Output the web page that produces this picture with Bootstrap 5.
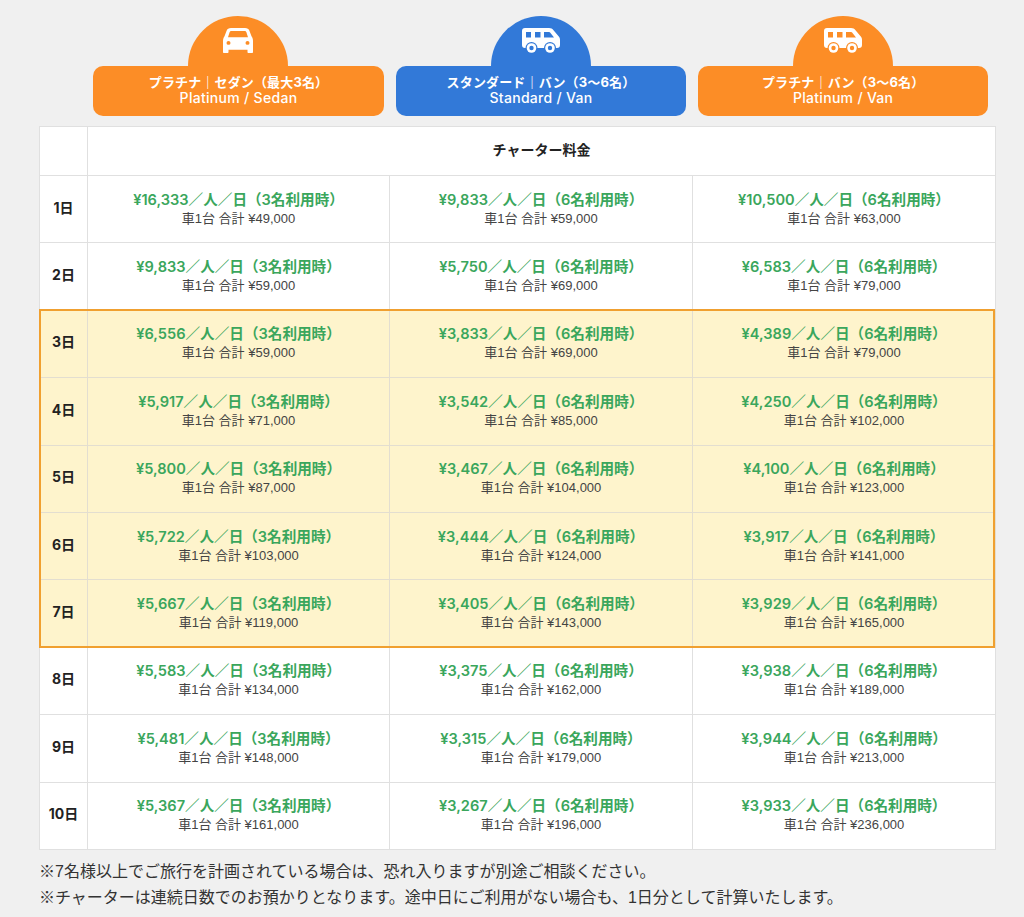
<!DOCTYPE html>
<html lang="ja">
<head>
<meta charset="utf-8">
<title>チャーター料金</title>
<link href="https://cdn.jsdelivr.net/npm/bootstrap@5.3.0/dist/css/bootstrap.min.css" rel="stylesheet">
<style>
html,body{height:917px;overflow:hidden}
body{background:#f0f0f0;color:#333;font-family:"Liberation Sans","Noto Sans CJK JP",sans-serif}
.page-wrap{padding:16px 29px 0 39px}
.plan-head{padding-left:48px;gap:0}
.plan-col{width:302.67px;padding:0 6px;display:flex;flex-direction:column;align-items:center}
.plan-col:first-child{padding-right:5.67px}
.plan-col:last-child{padding-right:7px}
.plan-dome{width:100px;height:50px;border-radius:50px 50px 0 0;display:flex;justify-content:center;color:#fff;padding-top:12px;margin-right:.5px}
.plan-label{width:100%;height:50px;border-radius:10px;color:#fff;font-family:Inter,"Noto Sans CJK JP",sans-serif;font-size:13px;line-height:16px;font-weight:700;text-align:center;padding-top:8px;letter-spacing:.15px}
.plan-en{font-size:14px;font-weight:500;letter-spacing:.3px}
.tone-orange{background:#fc8d26}
.tone-blue{background:#3279d8}
.table-frame{margin-top:10px;width:956px}
.rate-table{table-layout:fixed;width:956px;margin:0;--bs-table-bg:#fff;--bs-border-color:#e0e0e0;--bs-table-border-color:#e0e0e0;border-color:#e0e0e0}
.rate-table th,.rate-table td{padding:0;text-align:center;vertical-align:middle;height:67.4px}
.rate-table thead th{height:49px;padding-bottom:2px;font-size:14px;color:#222}
.rate-table tbody th{padding-bottom:4px;font-family:Inter,"Noto Sans CJK JP",sans-serif;font-size:14px;color:#222}
.rate-table tbody.hl-rows{--bs-table-bg:#fef4cc}
.hl-rows tr,.hl-rows th,.hl-rows td{border-color:#e3ded0}
.hl-outline{top:183px;left:0;right:0;height:339px;border:2px solid #f0a030;pointer-events:none}
.price-main{display:block;color:#3aa65c;font-family:Inter,"Noto Sans CJK JP",sans-serif;font-size:14.6px;font-weight:600;line-height:19px}
.price-sub{display:block;color:#444;font-size:13px;line-height:18px}
.note-list{font-size:16px;line-height:26px;color:#333;margin:9px 0 0;padding:0;list-style:none}
</style>
</head>
<body>
<div class="page-wrap">
  <div class="d-flex plan-head">
    <div class="plan-col">
      <div class="plan-dome tone-orange">
        <svg width="30" height="25" viewBox="0 0 30 26" preserveAspectRatio="none" fill="currentColor" fill-rule="evenodd"><path d="M8 0H22C24.300 0 25.700 1 26.500 3L28.500 8.500C29.500 10 30 11.500 30 13.500V25C30 25.600 29.600 26 29 26H25.500C24.900 26 24.500 25.600 24.500 25V22.500H5.500V25C5.500 25.600 5.100 26 4.500 26H1C.4 26 0 25.600 0 25V13.500C0 11.500 .5 10 1.500 8.500L3.500 3C4.300 1 5.700 0 8 0ZM8.500 3C7.500 3 7 3.500 6.600 4.500L5 9.500H25L23.400 4.500C23 3.500 22.500 3 21.500 3ZM5.500 13.500A2 2 0 1 0 5.500 17.500A2 2 0 1 0 5.500 13.500ZM24.500 13.500A2 2 0 1 0 24.500 17.500A2 2 0 1 0 24.500 13.500Z"/></svg>
      </div>
      <div class="plan-label tone-orange">プラチナ｜セダン（最大3名）<br><span class="plan-en">Platinum / Sedan</span></div>
    </div>
    <div class="plan-col">
      <div class="plan-dome tone-blue">
        <svg width="38" height="26" viewBox="0 0 38 26" fill="currentColor"><path fill-rule="evenodd" d="M3 0H27C29 0 30.500 .8 31.500 2.200L36.800 8.500C37.600 9.500 38 10.500 38 12V17C38 19 37 20 35 20H3C1 20 0 19 0 17V3C0 1 1 0 3 0ZM4 4V9.500H9V4ZM13 4V9.500H18.500V4ZM22 4V9.500H32L28.500 5C28 4.300 27.500 4 26.500 4Z"/><circle cx="9.500" cy="20" r="6" fill="#3279d8"/><circle cx="9.500" cy="20" r="4.800"/><circle cx="9.500" cy="20" r="2.200" fill="#3279d8"/><circle cx="28" cy="20" r="6" fill="#3279d8"/><circle cx="28" cy="20" r="4.800"/><circle cx="28" cy="20" r="2.200" fill="#3279d8"/></svg>
      </div>
      <div class="plan-label tone-blue">スタンダード｜バン（3〜6名）<br><span class="plan-en">Standard / Van</span></div>
    </div>
    <div class="plan-col">
      <div class="plan-dome tone-orange">
        <svg width="38" height="26" viewBox="0 0 38 26" fill="currentColor"><path fill-rule="evenodd" d="M3 0H27C29 0 30.500 .8 31.500 2.200L36.800 8.500C37.600 9.500 38 10.500 38 12V17C38 19 37 20 35 20H3C1 20 0 19 0 17V3C0 1 1 0 3 0ZM4 4V9.500H9V4ZM13 4V9.500H18.500V4ZM22 4V9.500H32L28.500 5C28 4.300 27.500 4 26.500 4Z"/><circle cx="9.500" cy="20" r="6" fill="#fc8d26"/><circle cx="9.500" cy="20" r="4.800"/><circle cx="9.500" cy="20" r="2.200" fill="#fc8d26"/><circle cx="28" cy="20" r="6" fill="#fc8d26"/><circle cx="28" cy="20" r="4.800"/><circle cx="28" cy="20" r="2.200" fill="#fc8d26"/></svg>
      </div>
      <div class="plan-label tone-orange">プラチナ｜バン（3〜6名）<br><span class="plan-en">Platinum / Van</span></div>
    </div>
  </div>
  <div class="table-frame position-relative">
  <table class="table table-bordered rate-table">
    <colgroup><col style="width:48px"><col style="width:302px"><col style="width:303px"><col style="width:303px"></colgroup>
    <thead><tr><th></th><th colspan="3">チャーター料金</th></tr></thead>
    <tbody>
      <tr><th>1日</th><td><span class="price-main">¥16,333／人／日（3名利用時）</span><span class="price-sub">車1台 合計 ¥49,000</span></td><td><span class="price-main">¥9,833／人／日（6名利用時）</span><span class="price-sub">車1台 合計 ¥59,000</span></td><td><span class="price-main">¥10,500／人／日（6名利用時）</span><span class="price-sub">車1台 合計 ¥63,000</span></td></tr>
      <tr><th>2日</th><td><span class="price-main">¥9,833／人／日（3名利用時）</span><span class="price-sub">車1台 合計 ¥59,000</span></td><td><span class="price-main">¥5,750／人／日（6名利用時）</span><span class="price-sub">車1台 合計 ¥69,000</span></td><td><span class="price-main">¥6,583／人／日（6名利用時）</span><span class="price-sub">車1台 合計 ¥79,000</span></td></tr>
    </tbody>
    <tbody class="hl-rows">
      <tr><th>3日</th><td><span class="price-main">¥6,556／人／日（3名利用時）</span><span class="price-sub">車1台 合計 ¥59,000</span></td><td><span class="price-main">¥3,833／人／日（6名利用時）</span><span class="price-sub">車1台 合計 ¥69,000</span></td><td><span class="price-main">¥4,389／人／日（6名利用時）</span><span class="price-sub">車1台 合計 ¥79,000</span></td></tr>
      <tr><th>4日</th><td><span class="price-main">¥5,917／人／日（3名利用時）</span><span class="price-sub">車1台 合計 ¥71,000</span></td><td><span class="price-main">¥3,542／人／日（6名利用時）</span><span class="price-sub">車1台 合計 ¥85,000</span></td><td><span class="price-main">¥4,250／人／日（6名利用時）</span><span class="price-sub">車1台 合計 ¥102,000</span></td></tr>
      <tr><th>5日</th><td><span class="price-main">¥5,800／人／日（3名利用時）</span><span class="price-sub">車1台 合計 ¥87,000</span></td><td><span class="price-main">¥3,467／人／日（6名利用時）</span><span class="price-sub">車1台 合計 ¥104,000</span></td><td><span class="price-main">¥4,100／人／日（6名利用時）</span><span class="price-sub">車1台 合計 ¥123,000</span></td></tr>
      <tr><th>6日</th><td><span class="price-main">¥5,722／人／日（3名利用時）</span><span class="price-sub">車1台 合計 ¥103,000</span></td><td><span class="price-main">¥3,444／人／日（6名利用時）</span><span class="price-sub">車1台 合計 ¥124,000</span></td><td><span class="price-main">¥3,917／人／日（6名利用時）</span><span class="price-sub">車1台 合計 ¥141,000</span></td></tr>
      <tr><th>7日</th><td><span class="price-main">¥5,667／人／日（3名利用時）</span><span class="price-sub">車1台 合計 ¥119,000</span></td><td><span class="price-main">¥3,405／人／日（6名利用時）</span><span class="price-sub">車1台 合計 ¥143,000</span></td><td><span class="price-main">¥3,929／人／日（6名利用時）</span><span class="price-sub">車1台 合計 ¥165,000</span></td></tr>
    </tbody>
    <tbody>
      <tr><th>8日</th><td><span class="price-main">¥5,583／人／日（3名利用時）</span><span class="price-sub">車1台 合計 ¥134,000</span></td><td><span class="price-main">¥3,375／人／日（6名利用時）</span><span class="price-sub">車1台 合計 ¥162,000</span></td><td><span class="price-main">¥3,938／人／日（6名利用時）</span><span class="price-sub">車1台 合計 ¥189,000</span></td></tr>
      <tr><th>9日</th><td><span class="price-main">¥5,481／人／日（3名利用時）</span><span class="price-sub">車1台 合計 ¥148,000</span></td><td><span class="price-main">¥3,315／人／日（6名利用時）</span><span class="price-sub">車1台 合計 ¥179,000</span></td><td><span class="price-main">¥3,944／人／日（6名利用時）</span><span class="price-sub">車1台 合計 ¥213,000</span></td></tr>
      <tr><th>10日</th><td><span class="price-main">¥5,367／人／日（3名利用時）</span><span class="price-sub">車1台 合計 ¥161,000</span></td><td><span class="price-main">¥3,267／人／日（6名利用時）</span><span class="price-sub">車1台 合計 ¥196,000</span></td><td><span class="price-main">¥3,933／人／日（6名利用時）</span><span class="price-sub">車1台 合計 ¥236,000</span></td></tr>
    </tbody>
  </table>
  <div class="hl-outline position-absolute"></div>
  </div>
  <ul class="note-list">
    <li>※7名様以上でご旅行を計画されている場合は、恐れ入りますが別途ご相談ください。</li>
    <li>※チャーターは連続日数でのお預かりとなります。途中日にご利用がない場合も、1日分として計算いたします。</li>
  </ul>
</div>
</body>
</html>
